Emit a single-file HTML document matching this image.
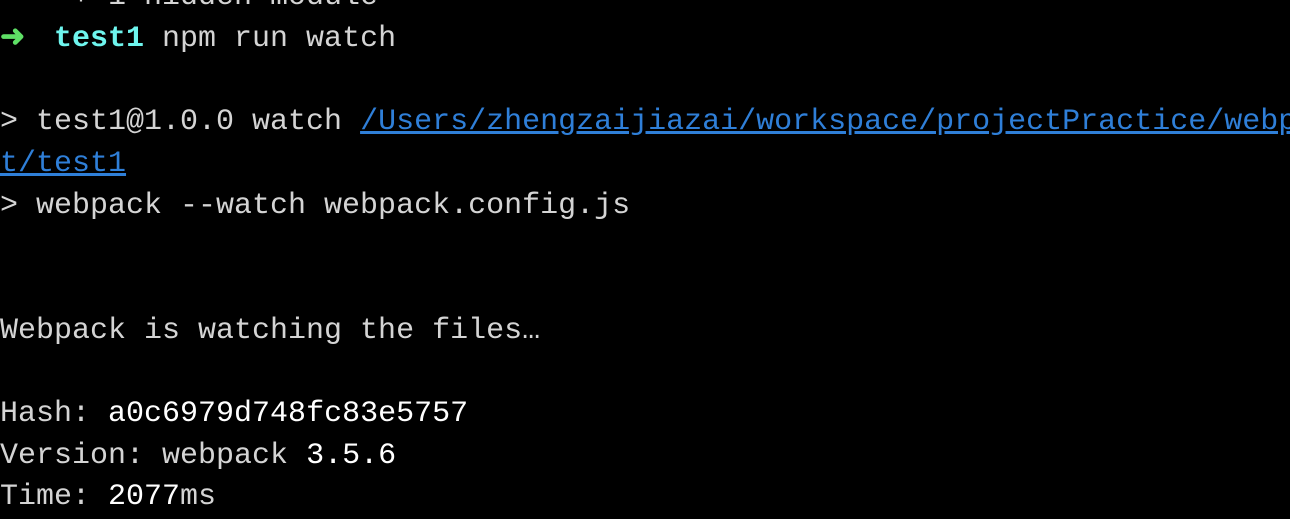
<!DOCTYPE html>
<html><head><style>
html,body{margin:0;padding:0;background:#000;width:1290px;height:486px;overflow:hidden}
pre{position:absolute;left:0;top:-23px;margin:0;font-family:"Liberation Mono",monospace;font-size:30px;line-height:41.7px;color:#d4d4d4;white-space:pre}
.g{color:#5fe066;font-weight:bold;display:inline-block;width:18px;overflow:visible}.c{color:#6ef5ee;font-weight:bold}
.u{color:#2f7fd8;text-decoration:underline}.w{color:#fff}
</style></head><body><pre>    + 1 hidden module
<span class="g">➜</span>  <span class="c">test1</span> npm run watch

&gt; test1@1.0.0 watch <span class="u">/Users/zhengzaijiazai/workspace/projectPractice/webpac</span>
<span class="u">t/test1</span>
&gt; webpack --watch webpack.config.js


Webpack is watching the files…

Hash: <span class="w">a0c6979d748fc83e5757</span>
Version: webpack <span class="w">3.5.6</span>
Time: <span class="w">2077</span>ms</pre></body></html>
